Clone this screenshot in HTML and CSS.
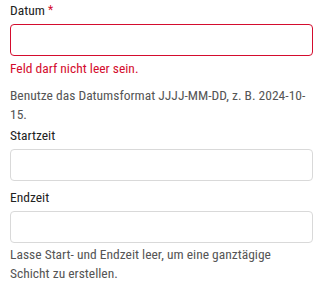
FILE: index.html
```html
<!DOCTYPE html>
<html lang="de">
<head>
    <meta charset="UTF-8">
    <meta name="viewport" content="width=device-width, initial-scale=1.0">
    <title>Schicht</title>
    <link rel="stylesheet" href="styles.css">
</head>
<body>
    <form class="shift-form">
        <div class="field with-hint">
            <label for="datum">Datum <span class="required">*</span></label>
            <input type="text" id="datum" class="input invalid">
            <p class="error">Feld darf nicht leer sein.</p>
            <p class="hint">Benutze das Datumsformat JJJJ-MM-DD, z. B. 2024-10-15.</p>
        </div>
        <div class="field">
            <label for="start">Startzeit</label>
            <input type="text" id="start" class="input">
        </div>
        <div class="field with-hint">
            <label for="ende">Endzeit</label>
            <input type="text" id="ende" class="input">
            <p class="hint">Lasse Start- und Endzeit leer, um eine ganztägige Schicht zu erstellen.</p>
        </div>
    </form>
</body>
</html>
```
FILE: styles.css
```css
body {
    margin: 0;
    padding: 0 10px;
    font-family: 'Roboto', 'Noto Sans', sans-serif;
    font-size: 13.5px;
    font-stretch: 80%;
    color: #222;
    background: #fff;
}

.shift-form {
    width: 303px;
}

.field {
    display: flex;
    flex-direction: column;
    margin-bottom: 6px;
}

.field.with-hint {
    margin-bottom: 1px;
}

label {
    line-height: 20px;
    margin-bottom: 4px;
}

.required {
    color: #d40c2e;
    font-size: 12px;
    vertical-align: top;
}

.input {
    box-sizing: border-box;
    width: 100%;
    height: 32px;
    margin: 0;
    border: 1px solid #d9d9d9;
    border-radius: 4px;
    background: #fff;
    font: inherit;
}

.input.invalid {
    border-color: #d40c2e;
}

.error {
    margin: 2px 0 0;
    line-height: 20px;
    color: #d40c2e;
}

.hint {
    margin: 8px 0 0;
    line-height: 19px;
    color: #555;
}

.input + .hint {
    margin-top: 2px;
}
```
